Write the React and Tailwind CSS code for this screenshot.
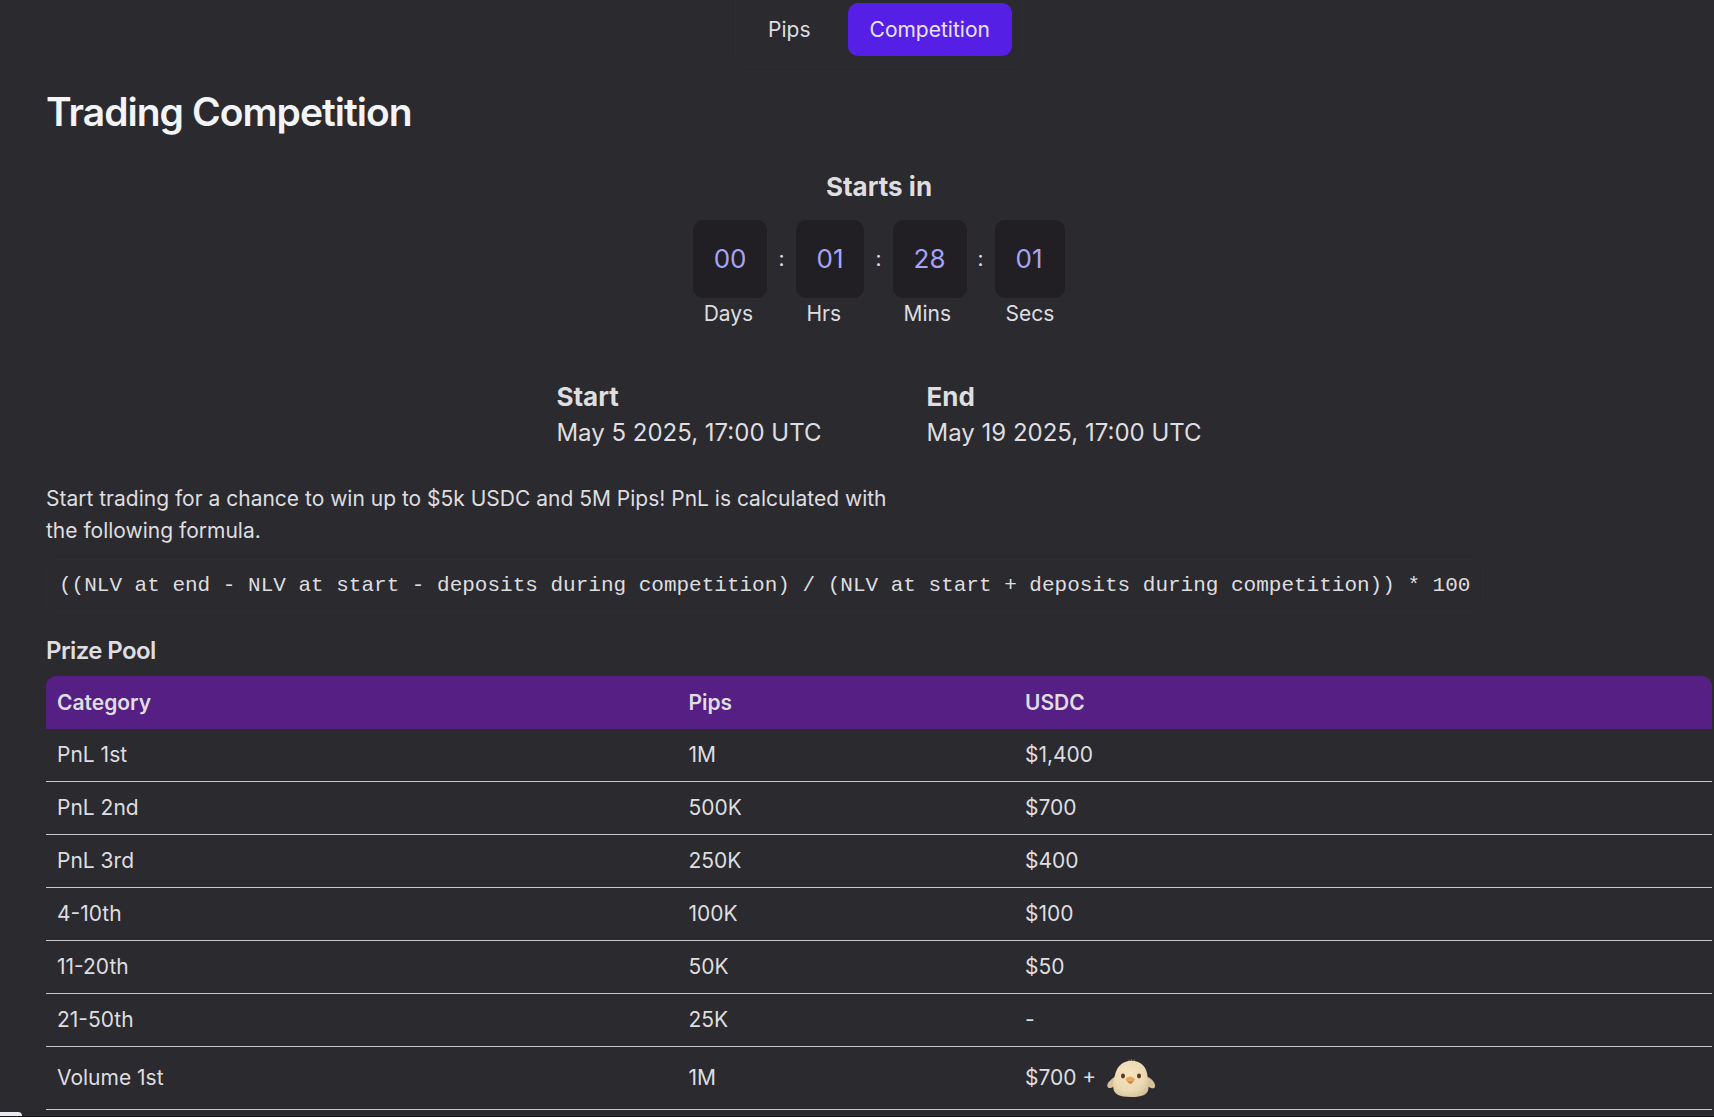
const prizes = [
  ["PnL 1st", "1M", "$1,400"],
  ["PnL 2nd", "500K", "$700"],
  ["PnL 3rd", "250K", "$400"],
  ["4-10th", "100K", "$100"],
  ["11-20th", "50K", "$50"],
  ["21-50th", "25K", "-"],
];

const countdown = [
  ["00", "Days"],
  ["01", "Hrs"],
  ["28", "Mins"],
  ["01", "Secs"],
];

function Chick() {
  return (
    <svg role="img" aria-label="Chick" viewBox="0 0 48 38" className="h-[38px] w-12">
      <defs>
        <radialGradient id="body" cx="0.42" cy="0.35" r="0.8">
          <stop offset="0" stopColor="#f6e3bf" />
          <stop offset="0.6" stopColor="#ecd9b4" />
          <stop offset="1" stopColor="#c9b794" />
        </radialGradient>
      </defs>
      <path d="M22.500 3 L22 1 M24.500 3 L24.500 0.500 M26.500 3 L27.500 1" stroke="#7d604b" strokeWidth="1.200" strokeLinecap="round" />
      <path d="M8 18 C4 20 0 24 0.300 27 C0.800 30 4 29.500 8 27 Z" fill="#d8c29b" />
      <path d="M41 18 C45 20 48.500 24 48 27.500 C47.500 30.500 44 29.500 40.500 27 Z" fill="#d8c29b" />
      <path d="M24.500 1.800 C33 1.800 38.500 7 40 14 C41 19 42 24 41.500 29 C41 35.500 36 38 24 38 C12 38 6.500 35 6.300 28.500 C6.200 24 7 19 8.500 14 C10.800 7 16 1.800 24.500 1.800 Z" fill="url(#body)" />
      <ellipse cx="16" cy="17" rx="2" ry="2.400" fill="#5d3527" />
      <ellipse cx="32" cy="17" rx="2" ry="2.400" fill="#5d3527" />
      <path d="M18 20.500 Q23 14.500 28.500 20.500 Q24 22.500 18 20.500 Z" fill="#efa754" />
      <path d="M19 21 Q23 22.500 27.500 21 Q25 25 23.500 25 Q21 24.500 19 21 Z" fill="#d58a48" />
    </svg>
  );
}

function Row({ category, pips, children }) {
  return (
    <tr className="leading-[30px]">
      <td className="border-b border-[#c8c8cb] p-[11px]">{category}</td>
      <td className="border-b border-[#c8c8cb] p-[11px]">{pips}</td>
      <td className="border-b border-[#c8c8cb] p-[11px]">{children}</td>
    </tr>
  );
}

export default function App() {
  return (
    <div className="relative h-screen overflow-hidden border-b border-[#151418] bg-[#2b2a2e] pr-[2px] pl-[46px] font-['Inter',sans-serif] text-[21px] leading-[31px] text-[#dedee0]">
      <nav aria-label="Sections" className="mx-auto flex w-fit gap-[15px] rounded-b-lg border border-t-0 border-[#2e2d32] px-[10px] pt-[3px] pb-[10px]">
        <button type="button" className="rounded-[10px] px-[22px] py-[11px]">Pips</button>
        <button type="button" aria-current="page" className="rounded-[10px] bg-[#561fe6] px-[22px] py-[11px] text-[#e8e4fa]">
          Competition
        </button>
      </nav>

      <main>
        <h1 className="mt-5 text-[39px] leading-[50px] font-semibold tracking-tight text-[#f3f4f6]">Trading Competition</h1>

        <section className="mt-8 flex flex-col items-center">
          <h2 className="text-[26px] leading-[36px] font-bold">Starts in</h2>
          <div className="mt-[15px] flex gap-[11px]">
            {countdown.map(([value, label], i) => (
              <div key={label} className="flex gap-[11px]">
                {i > 0 && <span className="leading-[78px]">:</span>}
                <div>
                  <div className="rounded-[10px] bg-[#211e24] p-[21px] text-[26px] leading-[36px] text-[#a5a5f5]">{value}</div>
                  <div className="px-[11px]">{label}</div>
                </div>
              </div>
            ))}
          </div>
        </section>

        <dl className="mt-[50px] flex justify-center gap-[105px] text-[24px] leading-[36px]">
          <div>
            <dt className="text-[26px] font-bold">Start</dt>
            <dd>May 5 2025, 17:00 UTC</dd>
          </div>
          <div>
            <dt className="text-[26px] font-bold">End</dt>
            <dd>May 19 2025, 17:00 UTC</dd>
          </div>
        </dl>

        <p className="mt-8 max-w-[853px] leading-[32px]">
          Start trading for a chance to win up to $5k USDC and 5M Pips! PnL is calculated with the following formula.
        </p>
        <code className="mt-3 block w-fit rounded-lg border border-[#2e2d32] px-3 py-[10px] font-['Liberation_Mono',monospace] whitespace-nowrap">
          ((NLV at end - NLV at start - deposits during competition) / (NLV at start + deposits during competition)) * 100
        </code>

        <h3 className="mt-[21px] text-[24px] leading-[36px] font-semibold tracking-tight">Prize Pool</h3>
        <table className="mt-[7px] w-full table-fixed border-separate border-spacing-0 text-left">
          <thead>
            <tr>
              <th className="w-[37.9%] rounded-tl-[10px] bg-[#551f83] p-[11px] font-semibold">Category</th>
              <th className="w-[20.2%] bg-[#551f83] p-[11px] font-semibold">Pips</th>
              <th className="rounded-tr-[10px] bg-[#551f83] p-[11px] font-semibold">USDC</th>
            </tr>
          </thead>
          <tbody>
            {prizes.map(([category, pips, usdc]) => (
              <Row key={category} category={category} pips={pips}>{usdc}</Row>
            ))}
            <Row category="Volume 1st" pips="1M">
              <span className="flex items-center gap-[11px] py-px">$700 + <Chick /></span>
            </Row>
          </tbody>
        </table>
      </main>
      <div className="absolute bottom-0 left-0 h-1 w-[22px] rounded-tr-[5px] bg-[#e8e8ee]" />
    </div>
  );
}
